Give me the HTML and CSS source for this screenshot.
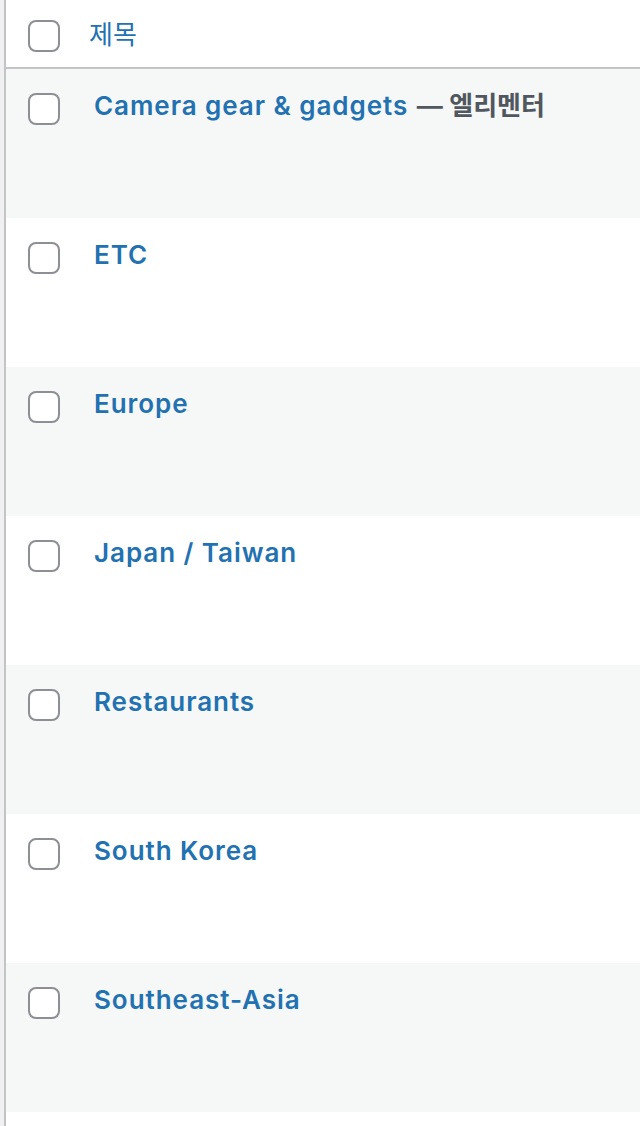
FILE: index.html
```html
<!DOCTYPE html>
<html lang="ko">
<head>
<meta charset="utf-8">
<title>글 목록</title>
<link rel="stylesheet" href="styles.css">
</head>
<body>
<div class="list">
  <div class="head">
    <span class="cb"></span>
    <a class="head-title" href="#">제목</a>
  </div>
  <div class="row alt">
    <span class="cb"></span>
    <div class="title"><a href="#">Camera gear &amp; gadgets</a> <span class="state">— 엘리멘터</span></div>
  </div>
  <div class="row">
    <span class="cb"></span>
    <div class="title"><a href="#">ETC</a></div>
  </div>
  <div class="row alt">
    <span class="cb"></span>
    <div class="title"><a href="#">Europe</a></div>
  </div>
  <div class="row">
    <span class="cb"></span>
    <div class="title"><a href="#">Japan / Taiwan</a></div>
  </div>
  <div class="row alt">
    <span class="cb"></span>
    <div class="title"><a href="#">Restaurants</a></div>
  </div>
  <div class="row">
    <span class="cb"></span>
    <div class="title"><a href="#">South Korea</a></div>
  </div>
  <div class="row alt">
    <span class="cb"></span>
    <div class="title"><a href="#">Southeast-Asia</a></div>
  </div>
  <div class="row"></div>
</div>
</body>
</html>
```
FILE: styles.css
```css
html, body {
  margin: 0;
  padding: 0;
  background: #f0f0f1;
}
body {
  font-family: Inter, "Noto Sans CJK KR", sans-serif;
}
.list {
  box-sizing: border-box;
  height: 1126px;
  overflow: hidden;
  margin-left: 4px;
  border-left: 2px solid #c3c4c7;
  background: #fff;
}
.head {
  display: flex;
  align-items: flex-start;
  height: 47px;
  padding: 20px 0 0 22px;
  border-bottom: 2px solid #c3c4c7;
}
.head-title {
  margin-left: 29px;
  margin-top: -5px;
  font-family: "Noto Sans CJK KR", sans-serif;
  font-size: 26px;
  line-height: 36px;
  color: #2271b1;
  text-decoration: none;
}
.cb {
  flex: none;
  box-sizing: border-box;
  width: 32px;
  height: 32px;
  border: 2px solid #8c8f94;
  border-radius: 8px;
  background: #fff;
}
.row {
  display: flex;
  align-items: flex-start;
  height: 128px;
  padding: 21px 0 0 22px;
  background: #fff;
}
.row.alt {
  background: #f6f7f7;
}
.row .cb {
  margin-top: 3px;
}
.title {
  margin-left: 34px;
  margin-top: -2px;
  font-size: 26px;
  font-weight: 600;
  line-height: 36px;
  white-space: nowrap;
}
.title a {
  color: #2271b1;
  text-decoration: none;
  letter-spacing: 0.95px;
}
.state {
  color: #50575e;
  margin-left: 2px;
}
```
